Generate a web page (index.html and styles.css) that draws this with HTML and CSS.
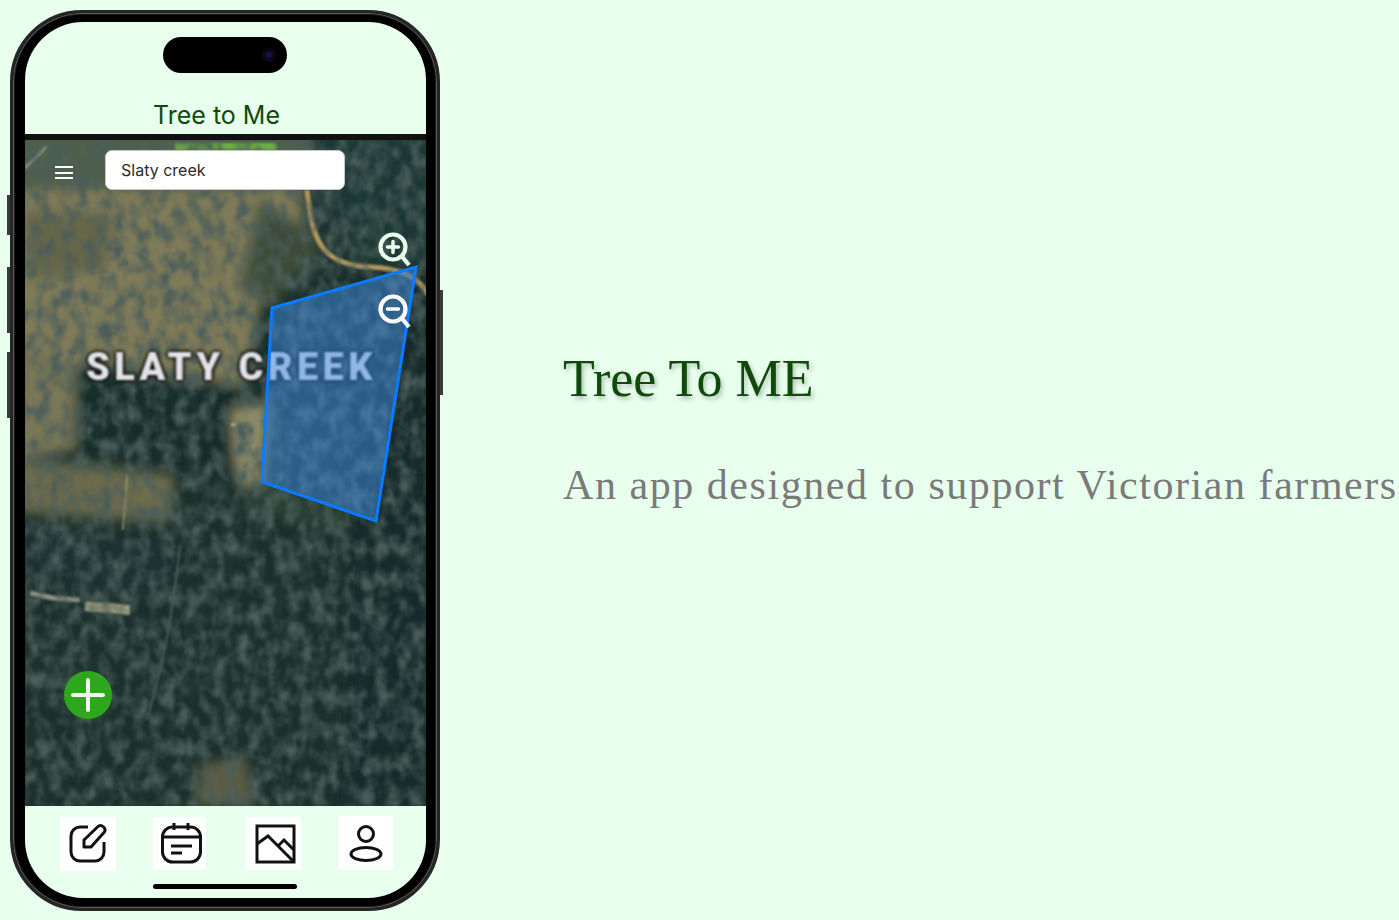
FILE: index.html
```html
<!DOCTYPE html>
<html lang="en">
<head>
  <meta charset="UTF-8">
  <meta name="viewport" content="width=device-width, initial-scale=1.0">
  <title>Tree To ME</title>
  <link rel="stylesheet" href="styles.css">
</head>
<body>

  <div class="phone">
    <span class="side-btn btn-mute"></span>
    <span class="side-btn btn-up"></span>
    <span class="side-btn btn-down"></span>
    <span class="side-btn btn-power"></span>

    <div class="screen">
      <div class="island"><span class="island-lens"></span></div>

      <header class="app-header">Tree to Me</header>

      <div class="map">
        <svg class="map-photo" viewBox="0 0 401 666" preserveAspectRatio="none">
          <defs>
            <filter id="soft" x="-10%" y="-10%" width="120%" height="120%"><feGaussianBlur stdDeviation="6"/></filter>
            <filter id="soft2"><feGaussianBlur stdDeviation="1.3"/></filter>
            <filter id="speck" x="0" y="0" width="100%" height="100%">
              <feTurbulence type="fractalNoise" baseFrequency="0.08 0.06" numOctaves="4" seed="12"/>
              <feColorMatrix values="0 0 0 0 0.07  0 0 0 0 0.11  0 0 0 0 0.1  2.4 0 0 0 -0.9"/>
              <feGaussianBlur stdDeviation="0.9"/>
            </filter>
            <filter id="glint" x="0" y="0" width="100%" height="100%">
              <feTurbulence type="fractalNoise" baseFrequency="0.12 0.03" numOctaves="2" seed="21"/>
              <feColorMatrix values="0 0 0 0 0.3  0 0 0 0 0.42  0 0 0 0 0.38  0 1.4 0 0 -0.72"/>
              <feGaussianBlur stdDeviation="1"/>
            </filter>
          </defs>

          <rect width="401" height="666" fill="#1b302c"/>
          <g filter="url(#soft)">
            <polygon points="-10,-10 290,-10 280,55 -10,50" fill="#4f5f4c"/>
            <polygon points="285,-10 411,-10 411,130 330,120 285,60" fill="#1c3936"/>
            <polygon points="-10,50 275,50 285,110 235,165 222,245 -10,218" fill="#7f7a58"/>
            <polygon points="0,70 90,75 80,130 0,140" fill="#66664a"/>
            <polygon points="235,60 300,100 250,165 215,150" fill="#3d4b38"/>
            <polygon points="-10,220 52,225 50,310 -10,320" fill="#7a7757"/>
            <polygon points="50,245 225,245 205,330 50,315" fill="#192d2b"/>
            <polygon points="-10,318 150,335 145,382 -10,372" fill="#6c6a4c"/>
            <polygon points="-10,385 150,395 140,455 -10,440" fill="#1a3031"/>
            <polygon points="205,270 245,260 240,355 212,345" fill="#8d8a66"/>
            <polygon points="225,340 360,380 350,400 220,370" fill="#2a4034"/>
            <polygon points="330,130 411,140 411,666 320,666" fill="#182b2b"/>
            <polygon points="175,625 220,615 232,666 170,666" fill="#5a5c45"/>
          </g>
          <g filter="url(#soft2)">
            <polygon points="150,3 252,3 252,10 150,10" fill="#6db33f"/>
            <path d="M282 50 C287 100 296 125 345 127 C375 128 395 138 403 155" fill="none" stroke="#b3985f" stroke-width="5"/>
            <path d="M5 453 L28 458 L55 460" fill="none" stroke="#8f9483" stroke-width="5"/>
            <path d="M60 466 L105 470" fill="none" stroke="#a3a07f" stroke-width="10"/>
            <path d="M0 28 L22 6" stroke="#8d9183" stroke-width="3"/>
            <path d="M102 335 L98 390" stroke="#a19d75" stroke-width="1.500"/>
            <path d="M155 405 C150 450 145 500 122 580" fill="none" stroke="#465a4f" stroke-width="2"/>
            <path d="M206 285 h6 M217 286 h4" stroke="#c0bc9c" stroke-width="2.500"/>
          </g>
          <rect width="401" height="666" filter="url(#speck)"/>
          <rect width="401" height="666" filter="url(#glint)" opacity=".16"/>
        </svg>

        <div class="map-label">SLATY CREEK</div>

        <svg class="map-area" viewBox="0 0 401 666">
          <polygon class="area-shape" points="247,168 391,127 351,381 237,342"/>
        </svg>

        <button class="menu-btn" aria-label="Menu"><span></span><span></span><span></span></button>
        <div class="search-box">Slaty creek</div>

        <svg class="zoom-btn zoom-in" viewBox="0 0 34 36">
          <circle cx="15" cy="15" r="12.500"/>
          <path d="M24 24.500 L31 33"/>
          <path class="thin" d="M9.500 15 H20.500 M15 9.500 V20.500"/>
        </svg>
        <svg class="zoom-btn zoom-out" viewBox="0 0 34 36">
          <circle cx="15" cy="15" r="12.500"/>
          <path d="M24 24.500 L31 33"/>
          <path class="thin" d="M9.500 15 H20.500"/>
        </svg>

        <button class="add-btn" aria-label="Add">
          <svg viewBox="0 0 48 48"><path d="M9 24 H39 M24 9 V39"/></svg>
        </button>
      </div>

      <nav class="tab-bar">
        <a class="tab tab-edit">
          <svg viewBox="0 0 56 54">
            <path d="M28 10 H20 a9 9 0 0 0 -9 9 v16 a9 9 0 0 0 9 9 h15 a9 9 0 0 0 9 -9 V25"/>
            <path d="M24 30 v-7 L38 9.500 a3.500 3.500 0 0 1 5 0 l1 1 a3.500 3.500 0 0 1 0 5 L31 30 z"/>
          </svg>
        </a>
        <a class="tab tab-cal">
          <svg viewBox="0 0 53 53">
            <rect x="9.500" y="10" width="38" height="35" rx="10"/>
            <path d="M9.500 20 H47.500 M21 6 V13 M35 6 V13 M18 29 H39 M18 36 H29"/>
          </svg>
        </a>
        <a class="tab tab-img">
          <svg viewBox="0 0 55 53">
            <rect x="11" y="9" width="37" height="36"/>
            <path d="M11 27 L22 19 L48 45 M32 29 L38 23 L48 33"/>
          </svg>
        </a>
        <a class="tab tab-user">
          <svg viewBox="0 0 55 54">
            <circle cx="28" cy="18" r="7.500"/>
            <ellipse cx="28" cy="38" rx="15" ry="6.500"/>
          </svg>
        </a>
      </nav>

      <div class="home-bar"></div>
    </div>
  </div>

  <main class="intro">
    <h1>Tree To ME</h1>
    <p>An app designed to support Victorian farmers</p>
  </main>

</body>
</html>
```

FILE: styles.css
```css
/* Page */
html, body {
  height: 100%;
}
body {
  margin: 0;
  background-color: #e9ffee;
  display: flex;
  align-items: flex-start;
  overflow: hidden;
  font-family: Inter, "Liberation Sans", sans-serif;
}

/* Phone frame */
.phone {
  position: relative;
  flex: none;
  box-sizing: border-box;
  width: 430px;
  height: 901px;
  margin: 10px 0 0 10px;
  padding: 9px 11px 10px 12px;
  background-color: #000;
  border: 3px solid #262626;
  border-radius: 72px;
  box-shadow: inset 0 0 0 1px #5a5a5a, inset 0 0 0 2px #1a1a1a;
}
.side-btn {
  position: absolute;
  width: 3px;
  background-color: #3a3a3a;
}
.btn-mute { left: -6px; top: 182px; height: 40px; }
.btn-up { left: -6px; top: 254px; height: 66px; }
.btn-down { left: -6px; top: 339px; height: 66px; }
.btn-power { right: -6px; top: 277px; height: 105px; }

.screen {
  position: relative;
  display: flex;
  flex-direction: column;
  height: 876px;
  overflow: hidden;
  background-color: #e9ffee;
  border-radius: 58px;
}
.island {
  position: absolute;
  left: 138px;
  top: 15px;
  width: 124px;
  height: 36px;
  background-color: #000;
  border-radius: 18px;
}
.island-lens {
  position: absolute;
  right: 15px;
  top: 15px;
  width: 6px;
  height: 6px;
  border-radius: 50%;
  background-color: #15154a;
  box-shadow: 0 0 0 4px #0a0a16;
}

/* Header */
.app-header {
  height: 112px;
  box-sizing: border-box;
  padding: 78px 18px 0 0;
  text-align: center;
  font-size: 25px;
  line-height: 30px;
  color: #0f4a0a;
}

/* Map */
.map {
  position: relative;
  flex: none;
  height: 666px;
  border-top: 6px solid #111;
  overflow: hidden;
}
.map-photo, .map-area {
  position: absolute;
  left: 0;
  top: 0;
  width: 401px;
  height: 666px;
}
.area-shape {
  fill: rgba(60, 140, 225, 0.5);
  stroke: #0a7cff;
  stroke-width: 3;
}
.map-label {
  position: absolute;
  left: 61px;
  top: 204px;
  font-family: Roboto, sans-serif;
  font-size: 38px;
  line-height: 46px;
  font-weight: 900;
  letter-spacing: 4.4px;
  white-space: nowrap;
  color: #e4e4e8;
  text-shadow: 0 0 2px #000, 0 0 3px #000, 0 0 4px #000, 0 0 5px #111;
  filter: blur(0.8px);
}
.menu-btn {
  position: absolute;
  left: 30px;
  top: 26px;
  display: flex;
  flex-direction: column;
  gap: 3.5px;
  width: 18px;
  padding: 0;
  border: none;
  background: none;
}
.menu-btn span {
  display: block;
  height: 2px;
  background-color: #fff;
}
.search-box {
  position: absolute;
  left: 80px;
  top: 10px;
  box-sizing: border-box;
  width: 240px;
  height: 40px;
  padding-left: 15px;
  background-color: #fff;
  border: 1px solid #c8c8c8;
  border-radius: 7px;
  font-size: 16px;
  line-height: 38px;
  color: #2a2a2a;
}
.zoom-btn {
  position: absolute;
  left: 353px;
  width: 34px;
  height: 36px;
  fill: none;
  stroke: #fff;
  stroke-width: 4.2;
}
.zoom-btn .thin {
  stroke-width: 3.5;
  stroke-linecap: round;
}
.zoom-in { top: 92px; stroke: #e9ffee; }
.zoom-out { top: 154px; }
.add-btn {
  position: absolute;
  left: 39px;
  top: 531px;
  width: 48px;
  height: 48px;
  padding: 0;
  border: none;
  border-radius: 50%;
  background-color: #2fa71c;
}
.add-btn svg {
  display: block;
  width: 48px;
  height: 48px;
  fill: none;
  stroke: #f4f4f4;
  stroke-width: 4;
  stroke-linecap: round;
}

/* Bottom tabs */
.tab-bar {
  display: flex;
  align-items: flex-start;
  padding-top: 11px;
  padding-left: 35px;
}
.tab {
  display: block;
  background-color: #fff;
}
.tab svg {
  display: block;
  width: 100%;
  height: 100%;
  fill: none;
  stroke: #111;
  stroke-width: 3;
  stroke-linejoin: round;
}
.tab-edit { width: 56px; height: 54px; margin-right: 37px; }
.tab-cal { width: 53px; height: 53px; margin-right: 40px; }
.tab-img { width: 55px; height: 53px; margin-right: 37px; }
.tab-user { width: 55px; height: 54px; margin-top: -1px; }
.tab-img svg { stroke-linejoin: miter; }
.home-bar {
  position: absolute;
  left: 128px;
  bottom: 9px;
  width: 144px;
  height: 5px;
  border-radius: 3px;
  background-color: #000;
}

/* Intro text */
.intro {
  flex: none;
  margin: 345px 0 0 123px;
  white-space: nowrap;
  font-family: "Liberation Serif", serif;
}
.intro h1 {
  margin: 0;
  font-size: 52px;
  line-height: 68px;
  font-weight: 400;
  color: #0f4a0a;
  text-shadow: 2px 3px 4px rgba(0, 0, 0, 0.25);
}
.intro p {
  margin: 46px 0 0;
  font-size: 42px;
  line-height: 52px;
  letter-spacing: 1.55px;
  color: #7a7a7a;
}
```
